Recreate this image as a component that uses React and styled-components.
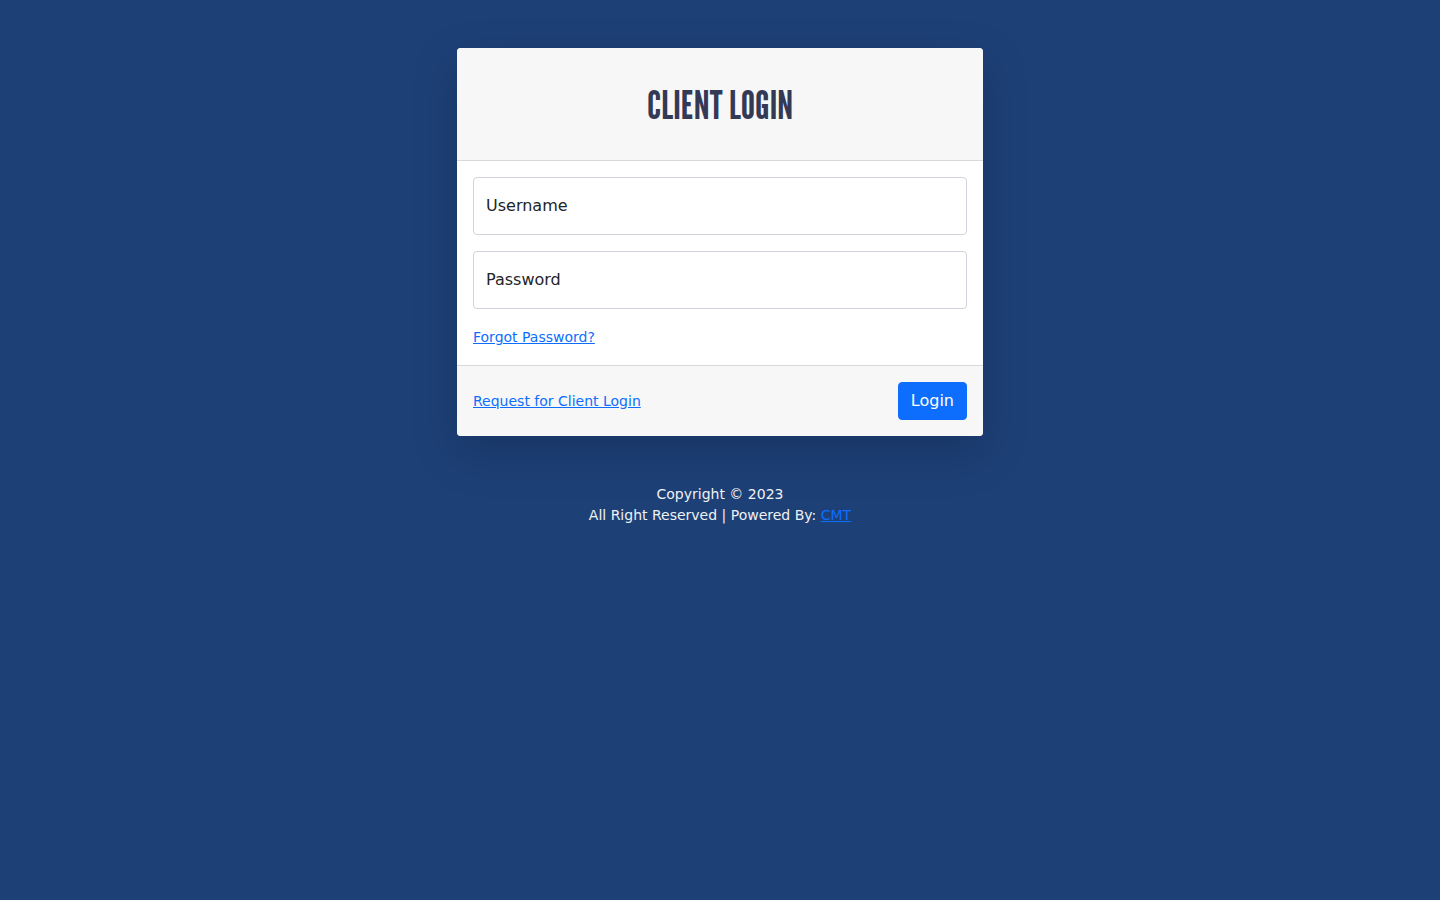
import React from "react";
import styled, { createGlobalStyle } from "styled-components";

const GlobalStyle = createGlobalStyle`
  *, *::before, *::after { box-sizing: border-box; }
  body {
    margin: 0;
    background: #1d4077;
    color: #212529;
    font-family: "DejaVu Sans", sans-serif;
    font-size: 16px;
    line-height: 24px;
  }
`;

const Page = styled.div`
  display: flex;
  flex-direction: column;
  align-items: center;
  gap: 48px;
  min-height: 100vh;
  padding: 48px 12px;
`;

const Card = styled.form`
  width: 100%;
  max-width: 526px;
  border-radius: 4px;
  overflow: hidden;
  background: #fff;
  box-shadow: 0 16px 48px rgba(0, 0, 0, 0.175);
`;

const CardHeader = styled.header`
  padding: 32px 16px;
  background: #f7f7f7;
  border-bottom: 1px solid #d8d8d8;
`;

const Title = styled.h1`
  margin: 0;
  color: #343a56;
  font-family: "League Gothic", "Bebas Neue", "Liberation Sans", sans-serif;
  font-size: 40px;
  font-weight: 400;
  line-height: 48px;
  text-align: center;
  text-transform: uppercase;
  white-space: nowrap;
`;

const CardBody = styled.div`
  display: flex;
  flex-direction: column;
  align-items: flex-start;
  gap: 16px;
  padding: 16px;
`;

const Field = styled.div`
  display: grid;
  width: 100%;
`;

const Input = styled.input`
  grid-area: 1 / 1;
  width: 100%;
  height: 58px;
  padding: 16px 12px;
  border: 1px solid #ced4da;
  border-radius: 4px;
  background: #fff;
  color: inherit;
  font: inherit;

  &:focus {
    outline: 2px solid #86b7fe;
  }
`;

const Label = styled.label`
  grid-area: 1 / 1;
  align-self: center;
  padding: 0 13px;
  pointer-events: none;

  ${Input}:not(:placeholder-shown) + & {
    visibility: hidden;
  }
`;

const Link = styled.a`
  color: #0d6efd;
  font-size: 14px;
  text-decoration: underline;
`;

const CardFooter = styled.footer`
  display: flex;
  align-items: center;
  justify-content: space-between;
  padding: 16px;
  background: #f7f7f7;
  border-top: 1px solid #d8d8d8;
`;

const Button = styled.button`
  padding: 6px 12px;
  border: 1px solid #0d6efd;
  border-radius: 4px;
  background: #0d6efd;
  color: #fff;
  font: inherit;
  cursor: pointer;
`;

const Copyright = styled.p`
  margin: 0;
  color: #f0f1f3;
  font-size: 14px;
  line-height: 21px;
  text-align: center;
`;

function FloatingField({ id, label, type }) {
  return (
    <Field>
      <Input id={id} name={id} type={type} placeholder=" " />
      <Label htmlFor={id}>{label}</Label>
    </Field>
  );
}

export default function App() {
  return (
    <>
      <GlobalStyle />
      <Page>
        <Card onSubmit={(event) => event.preventDefault()}>
          <CardHeader>
            <Title>Client Login</Title>
          </CardHeader>
          <CardBody>
            <FloatingField id="username" label="Username" type="text" />
            <FloatingField id="password" label="Password" type="password" />
            <Link href="#forgot">Forgot Password?</Link>
          </CardBody>
          <CardFooter>
            <Link href="#request">Request for Client Login</Link>
            <Button type="submit">Login</Button>
          </CardFooter>
        </Card>
        <Copyright>
          Copyright © 2023
          <br />
          All Right Reserved | Powered By: <Link href="#cmt">CMT</Link>
        </Copyright>
      </Page>
    </>
  );
}
